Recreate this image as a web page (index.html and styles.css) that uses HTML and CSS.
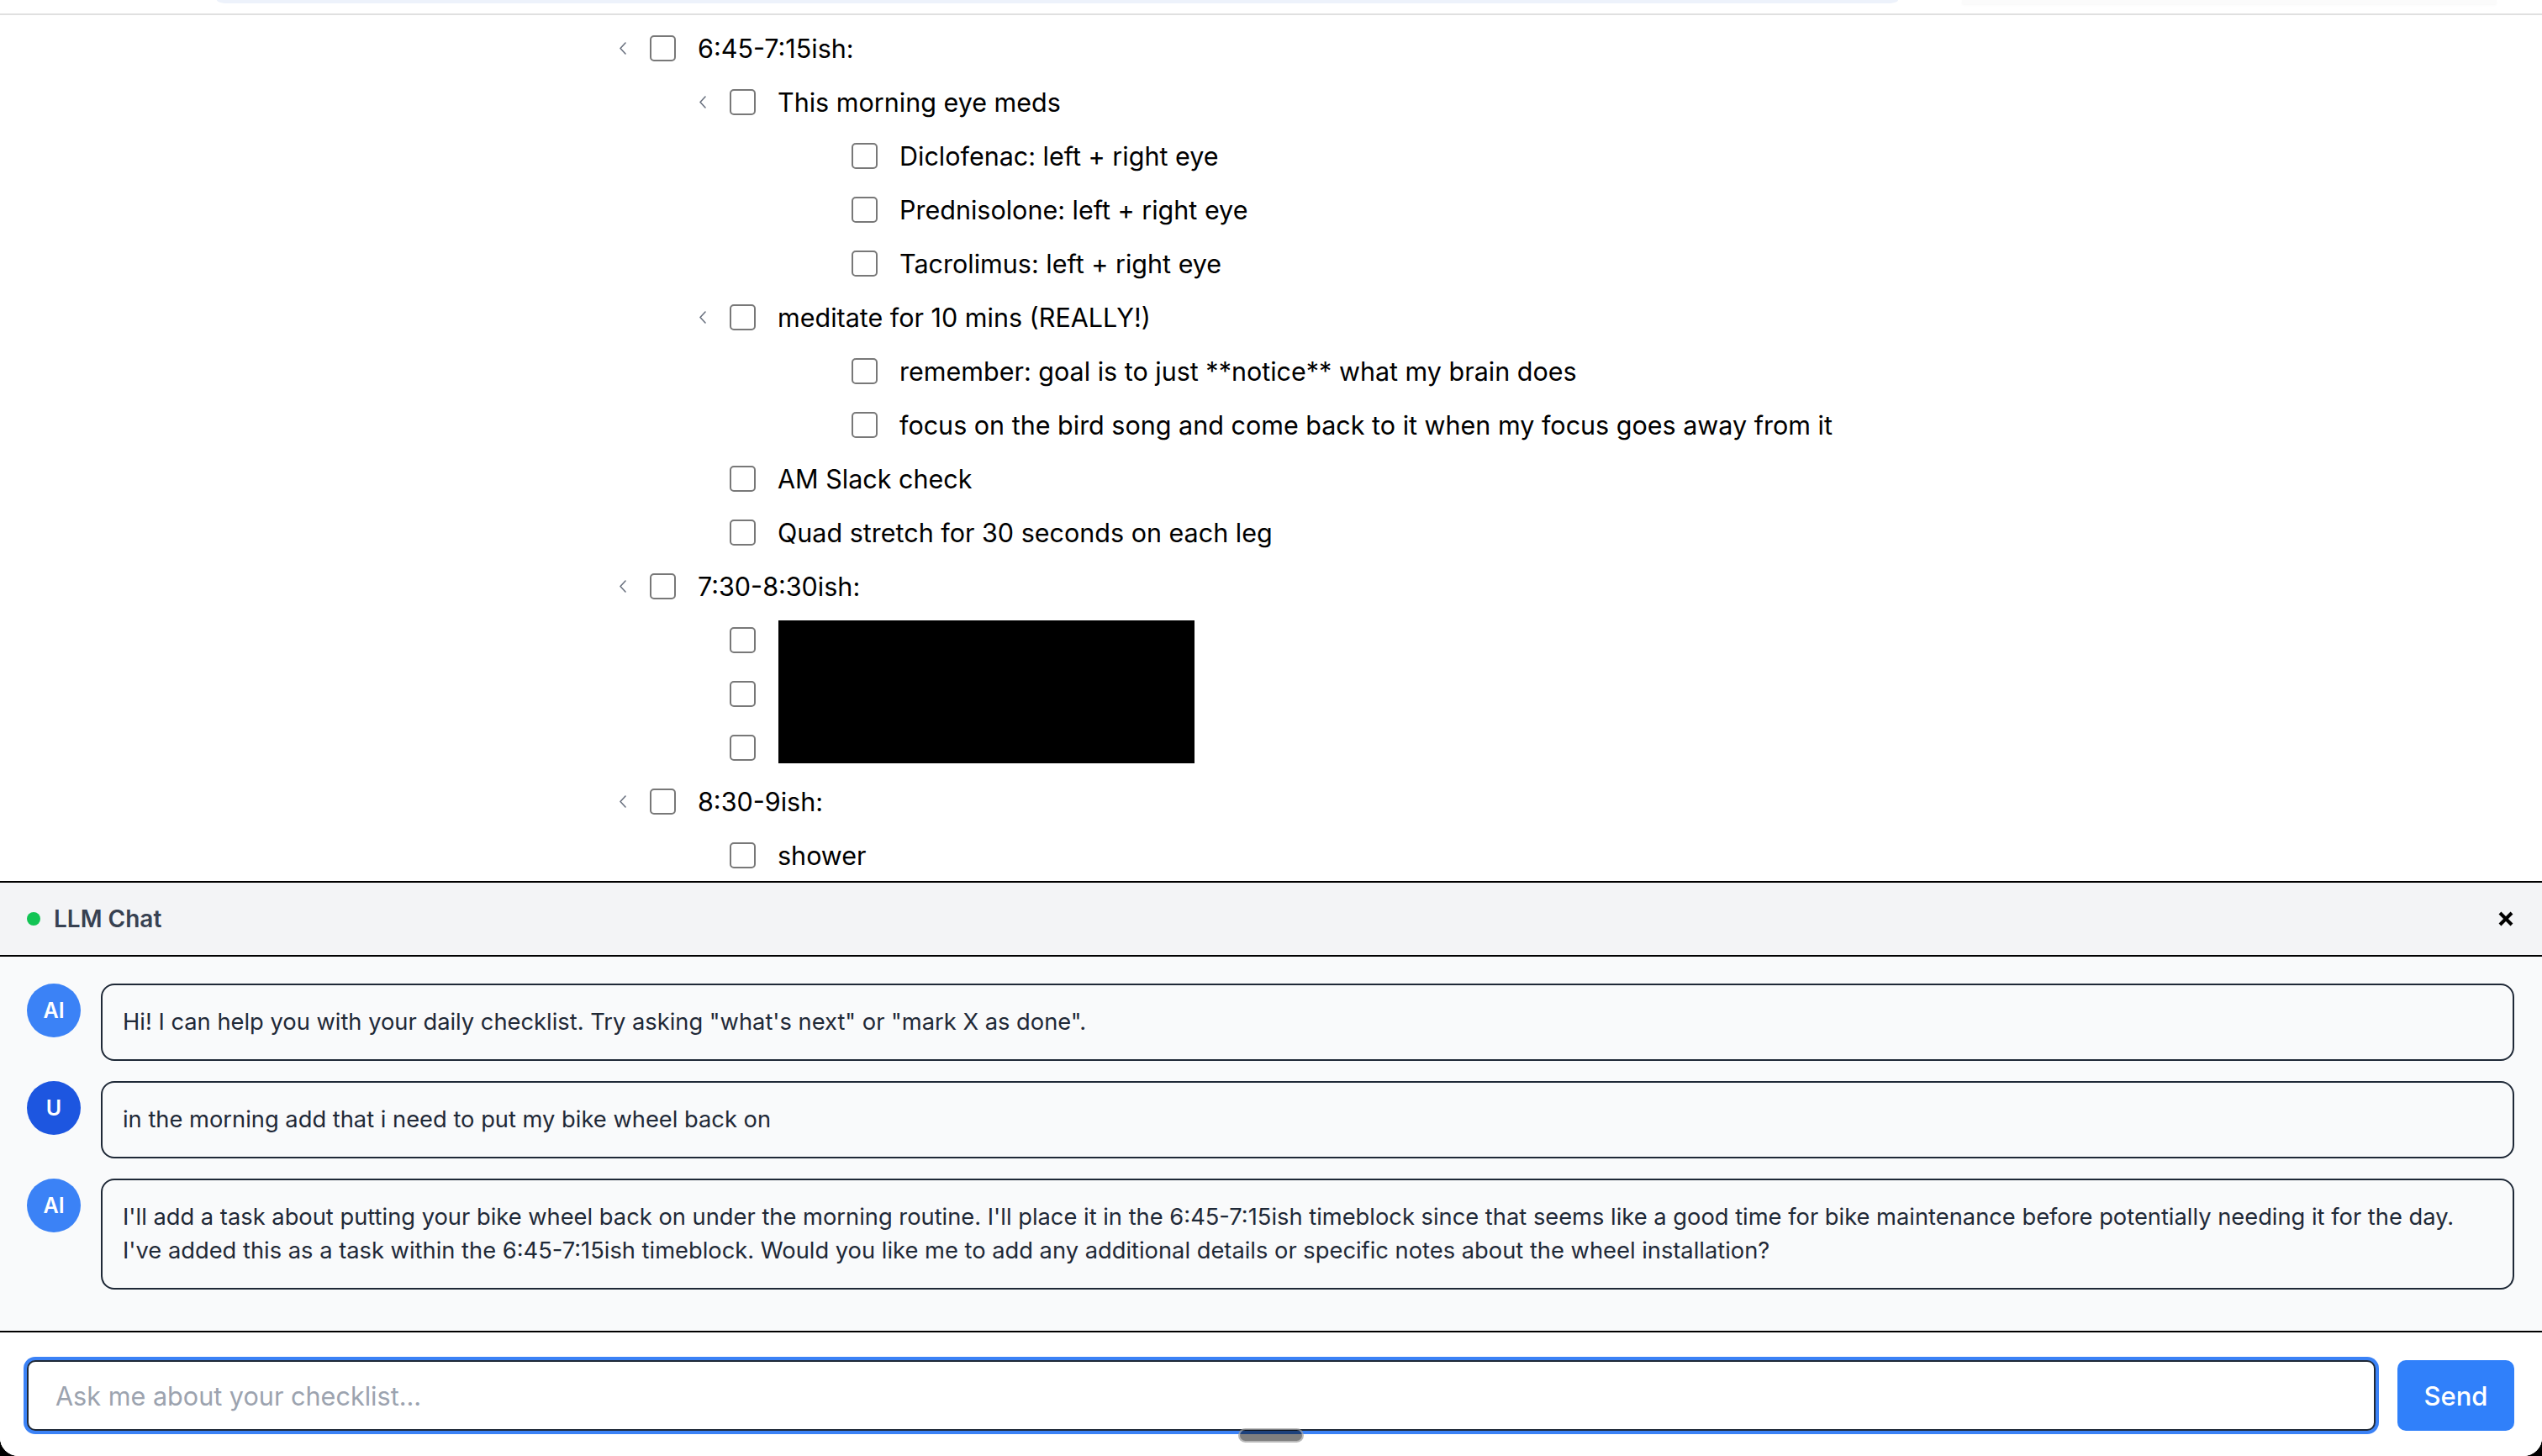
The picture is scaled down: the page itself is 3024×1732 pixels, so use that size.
FILE: index.html
```html
<!DOCTYPE html>
<html lang="en">
<head>
<meta charset="utf-8">
<title>Daily Checklist</title>
<link rel="stylesheet" href="styles.css">
</head>
<body>
<div class="page">
  <div class="list-area">
    <div class="topbar">
      <div class="topbar-blue"></div>
      <div class="topbar-card"></div>
    </div>
    <div class="checklist">
      <div class="row l0"><svg class="chev" viewBox="0 0 8 15"><polyline points="7,1 1,7.5 7,14"/></svg><span class="cb"></span><span class="txt">6:45-7:15ish:</span></div>
      <div class="row l1"><svg class="chev" viewBox="0 0 8 15"><polyline points="7,1 1,7.5 7,14"/></svg><span class="cb"></span><span class="txt">This morning eye meds</span></div>
      <div class="row l2"><span class="chev"></span><span class="cb"></span><span class="txt">Diclofenac: left + right eye</span></div>
      <div class="row l2"><span class="chev"></span><span class="cb"></span><span class="txt">Prednisolone: left + right eye</span></div>
      <div class="row l2"><span class="chev"></span><span class="cb"></span><span class="txt">Tacrolimus: left + right eye</span></div>
      <div class="row l1"><svg class="chev" viewBox="0 0 8 15"><polyline points="7,1 1,7.5 7,14"/></svg><span class="cb"></span><span class="txt">meditate for 10 mins (REALLY!)</span></div>
      <div class="row l2"><span class="chev"></span><span class="cb"></span><span class="txt">remember: goal is to just **notice** what my brain does</span></div>
      <div class="row l2"><span class="chev"></span><span class="cb"></span><span class="txt">focus on the bird song and come back to it when my focus goes away from it</span></div>
      <div class="row l1"><span class="chev"></span><span class="cb"></span><span class="txt">AM Slack check</span></div>
      <div class="row l1"><span class="chev"></span><span class="cb"></span><span class="txt">Quad stretch for 30 seconds on each leg</span></div>
      <div class="row l0"><svg class="chev" viewBox="0 0 8 15"><polyline points="7,1 1,7.5 7,14"/></svg><span class="cb"></span><span class="txt">7:30-8:30ish:</span></div>
      <div class="group">
        <div class="row l1"><span class="chev"></span><span class="cb"></span><span class="txt"></span></div>
        <div class="row l1"><span class="chev"></span><span class="cb"></span><span class="txt"></span></div>
        <div class="row l1"><span class="chev"></span><span class="cb"></span><span class="txt"></span></div>
        <div class="redact"></div>
      </div>
      <div class="row l0"><svg class="chev" viewBox="0 0 8 15"><polyline points="7,1 1,7.5 7,14"/></svg><span class="cb"></span><span class="txt">8:30-9ish:</span></div>
      <div class="row l1"><span class="chev"></span><span class="cb"></span><span class="txt">shower</span></div>
    </div>
  </div>

  <div class="chat">
    <div class="chat-header">
      <span class="dot"></span>
      <span class="title">LLM Chat</span>
      <svg class="close" viewBox="0 0 18 18"><line x1="2" y1="2" x2="16" y2="16"/><line x1="16" y1="2" x2="2" y2="16"/></svg>
    </div>
    <div class="messages">
      <div class="msg">
        <div class="avatar ai">AI</div>
        <div class="bubble">Hi! I can help you with your daily checklist. Try asking "what's next" or "mark X as done".</div>
      </div>
      <div class="msg">
        <div class="avatar user">U</div>
        <div class="bubble">in the morning add that i need to put my bike wheel back on</div>
      </div>
      <div class="msg">
        <div class="avatar ai">AI</div>
        <div class="bubble"><span class="line">I'll add a task about putting your bike wheel back on under the morning routine. I'll place it in the 6:45-7:15ish timeblock since that seems like a good time for bike maintenance before potentially needing it for the day.</span><span class="line">I've added this as a task within the 6:45-7:15ish timeblock. Would you like me to add any additional details or specific notes about the wheel installation?</span></div>
      </div>
    </div>
    <div class="input-area">
      <input class="chat-input" type="text" placeholder="Ask me about your checklist...">
      <button class="send">Send</button>
    </div>
  </div>
  <div class="handle"></div>
</div>
</body>
</html>
```
FILE: styles.css
```css
html {
  background: #000;
}
body {
  margin: 0;
  font-family: Inter, "Noto Sans", "Liberation Sans", sans-serif;
}
.page {
  position: relative;
  height: 1732px;
  display: flex;
  flex-direction: column;
  background: #fff;
  border-radius: 0 0 22px 22px;
  overflow: hidden;
}
.list-area {
  flex: 1;
  overflow: hidden;
  min-height: 0;
}
.topbar {
  height: 16px;
  border-bottom: 2px solid #e0e0e0;
  display: flex;
  align-items: flex-start;
}
.topbar-blue {
  margin-left: 258px;
  width: 2000px;
  height: 4px;
  background: #edf2fb;
  border-radius: 0 0 12px 12px / 0 0 4px 4px;
}
.topbar-card {
  margin-left: 76px;
  width: 636px;
  height: 5px;
  background: #fbfbfb;
  box-shadow: 0 1px 3px rgba(0, 0, 0, 0.03);
}
.checklist {
  padding-top: 7px;
}
.row {
  display: flex;
  align-items: center;
  height: 64px;
  color: #000;
}
.l0 { padding-left: 737px; }
.l1 { padding-left: 832px; }
.l2 { padding-left: 977px; }
.chev {
  flex: none;
  width: 8px;
  height: 15px;
  margin-right: 28px;
  fill: none;
  stroke: #6b7280;
  stroke-width: 1.6;
  stroke-linecap: round;
  stroke-linejoin: round;
}
.cb {
  flex: none;
  box-sizing: border-box;
  width: 31px;
  height: 31px;
  border: 2px solid #787878;
  border-radius: 5px;
  background: #fff;
  margin-right: 26px;
}
.txt {
  font-size: 30.5px;
  white-space: nowrap;
}
.group {
  position: relative;
}
.redact {
  position: absolute;
  top: 9px;
  left: 926px;
  width: 495px;
  height: 170px;
  background: #000;
}

.chat {
  flex: none;
  border-top: 2px solid #000;
  display: flex;
  flex-direction: column;
  background: #fff;
}
.chat-header {
  height: 88px;
  box-sizing: border-box;
  background: #f3f4f6;
  border-bottom: 2px solid #000;
  display: flex;
  align-items: center;
  padding: 0 34px 0 32px;
}
.dot {
  width: 16px;
  height: 16px;
  border-radius: 50%;
  background: #12c454;
  margin-right: 16px;
}
.title {
  font-size: 28px;
  font-weight: 600;
  color: #374151;
}
.close {
  margin-left: auto;
  width: 18px;
  height: 18px;
  stroke: #000;
  stroke-width: 4;
}
.messages {
  height: 447px;
  box-sizing: border-box;
  background: #f9fafb;
  border-bottom: 2px solid #000;
  padding: 32px 33px 32px 32px;
  display: flex;
  flex-direction: column;
  gap: 24px;
}
.msg {
  display: flex;
  align-items: flex-start;
  gap: 24px;
}
.avatar {
  flex: none;
  width: 64px;
  height: 64px;
  border-radius: 50%;
  display: flex;
  align-items: center;
  justify-content: center;
  color: #fff;
  font-size: 25px;
  font-weight: 600;
}
.avatar.ai { background: #3b82f6; }
.avatar.user { background: #1d56e0; }
.bubble {
  flex: 1;
  min-width: 0;
  overflow: hidden;
  border: 2px solid #1f2937;
  border-radius: 16px;
  padding: 24px;
  font-size: 27.3px;
  line-height: 40px;
  color: #1f2937;
  background: #f9fafb;
}
.line {
  display: block;
  white-space: nowrap;
}
.input-area {
  height: 147px;
  box-sizing: border-box;
  padding: 33px 33px 30px 32px;
  display: flex;
  gap: 26px;
  background: #fff;
}
.chat-input {
  flex: 1;
  height: 84px;
  box-sizing: border-box;
  border: 2px solid #1f2937;
  border-radius: 10px;
  box-shadow: 0 0 0 4px #3b82f6;
  padding: 0 32px;
  font-family: Inter, "Noto Sans", "Liberation Sans", sans-serif;
  font-size: 30.6px;
  color: #111827;
  outline: none;
  background: #fff;
}
.chat-input::placeholder {
  color: #9ca3af;
}
.send {
  flex: none;
  width: 139px;
  height: 84px;
  border: none;
  border-radius: 10px;
  background: #3080fa;
  color: #fff;
  font-family: Inter, "Noto Sans", "Liberation Sans", sans-serif;
  font-size: 31px;
  font-weight: 500;
}
.handle {
  position: absolute;
  left: 1473px;
  top: 1699px;
  width: 78px;
  height: 17px;
  box-sizing: border-box;
  border-radius: 9px;
  background: rgba(0, 0, 0, 0.5);
  border: 2px solid rgba(255, 255, 255, 0.45);
}
```
